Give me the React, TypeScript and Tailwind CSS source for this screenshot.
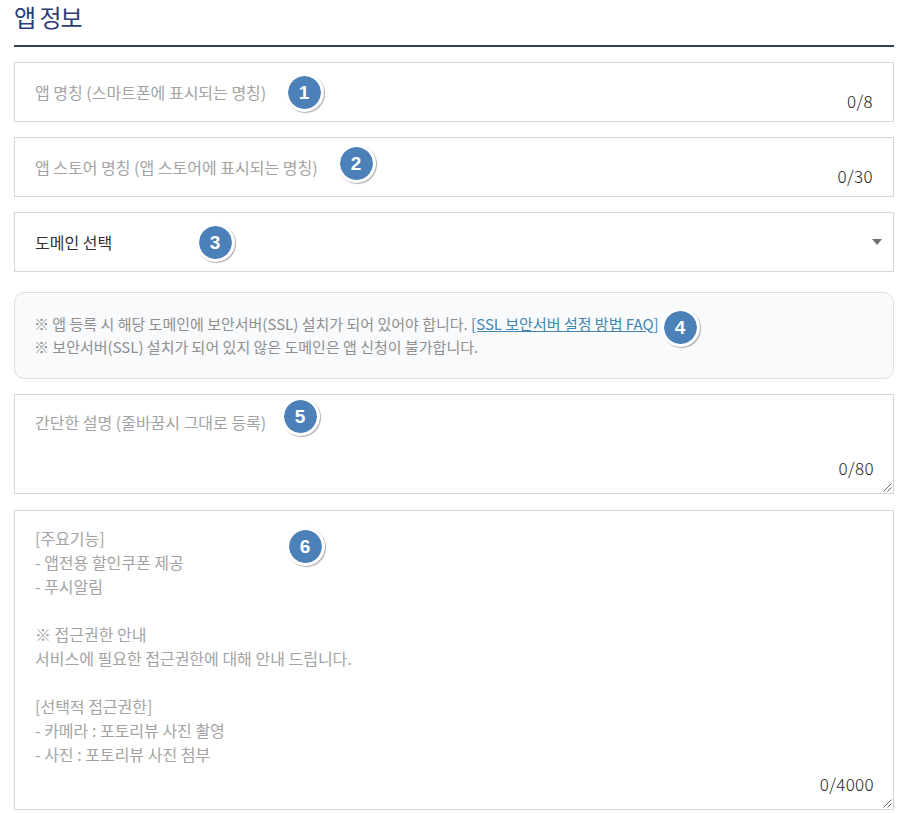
import React from "react";

function Badge({ n, className }: { n: number; className: string }) {
  return (
    <span
      className={`absolute flex size-[39px] items-center justify-center rounded-full border-3 border-white bg-[#4b80b8] bg-clip-padding font-['Liberation_Sans',Arial,sans-serif] text-[19px] leading-none font-bold text-white shadow-[1px_1px_1px_rgba(0,0,0,0.32)] ${className}`}
    >
      {n}
    </span>
  );
}

function Counter({ children }: { children: string }) {
  return <span className="self-end text-[17px] leading-6 font-light tracking-[0.35px] text-[#222]">{children}</span>;
}

function Resizer() {
  return (
    <svg className="absolute right-px bottom-px" width="9" height="9" viewBox="0 0 9 9" stroke="#555" strokeWidth="0.9">
      <path d="M0.500 8.500L8.500 0.500M4.500 8.500L8.500 4.500" />
    </svg>
  );
}

const field = "relative flex h-[60px] justify-between border border-[#d3d7da] px-5 pb-2";
const area = "relative flex justify-between border border-[#d3d7da] pt-[15px] pr-[19px] pb-[13px] pl-5 leading-6";
const lines = [
  "[주요기능]",
  "- 앱전용 할인쿠폰 제공",
  "- 푸시알림",
  "",
  "※ 접근권한 안내",
  "서비스에 필요한 접근권한에 대해 안내 드립니다.",
  "",
  "[선택적 접근권한]",
  "- 카메라 : 포토리뷰 사진 촬영",
  "- 사진 : 포토리뷰 사진 첨부",
];

export default function App() {
  return (
    <main className="flex h-[814px] w-[915px] flex-col overflow-hidden bg-white pr-[21px] pl-[14px] font-['Noto_Sans_CJK_KR',sans-serif] text-base text-[#a3a3a3]">
      <h1 className="h-[47px] border-b-2 border-[#2b4358] text-2xl leading-[34px] tracking-[-1px] text-[#2b3d75]">앱 정보</h1>
      <div className="flex flex-col gap-[15px] pt-[15px]">
        <div className={field}>
          <span className="pt-[17px] leading-6">앱 명칭 (스마트폰에 표시되는 명칭)</span>
          <Counter>0/8</Counter>
          <Badge n={1} className="top-[10px] left-[269.5px]" />
        </div>
        <div className={field}>
          <span className="pt-[17px] leading-6">앱 스토어 명칭 (앱 스토어에 표시되는 명칭)</span>
          <Counter>0/30</Counter>
          <Badge n={2} className="top-[6px] left-[321.5px]" />
        </div>
        <div className="relative flex h-[60px] items-center justify-between border border-[#d3d7da] pr-[11px] pl-5">
          <span className="text-[#303030]">도메인 선택</span>
          <svg width="10" height="6" viewBox="0 0 10 6" fill="#707070">
            <path d="M0 0H10L5 6Z" />
          </svg>
          <Badge n={3} className="top-[10px] left-[180.5px]" />
        </div>
      </div>
      <div className="relative mt-5 flex h-[87px] flex-col rounded-[10px] border border-[#dce0e3] bg-[#f8fafc] pt-[19px] pr-5 pl-[19px] text-[15px] leading-[23px] text-[#8f8f8f]">
        <p>
          ※ 앱 등록 시 해당 도메인에 보안서버(SSL) 설치가 되어 있어야 합니다.{" "}
          <a className="text-[#4385b0] underline">[SSL 보안서버 설정 방법 FAQ]</a>
        </p>
        <p>※ 보안서버(SSL) 설치가 되어 있지 않은 도메인은 앱 신청이 불가합니다.</p>
        <Badge n={4} className="top-[15px] left-[645.5px]" />
      </div>
      <div className="flex flex-col gap-4 pt-[15px]">
        <div className={`${area} h-[100px]`}>
          <span>간단한 설명 (줄바꿈시 그대로 등록)</span>
          <Counter>0/80</Counter>
          <Badge n={5} className="top-[2px] left-[265.5px]" />
          <Resizer />
        </div>
        <div className={`${area} h-[300px]`}>
          <div>
            {lines.map((line, i) => (
              <p key={i} className="h-6">{line}</p>
            ))}
          </div>
          <Counter>0/4000</Counter>
          <Badge n={6} className="top-[16px] left-[270.5px]" />
          <Resizer />
        </div>
      </div>
    </main>
  );
}
